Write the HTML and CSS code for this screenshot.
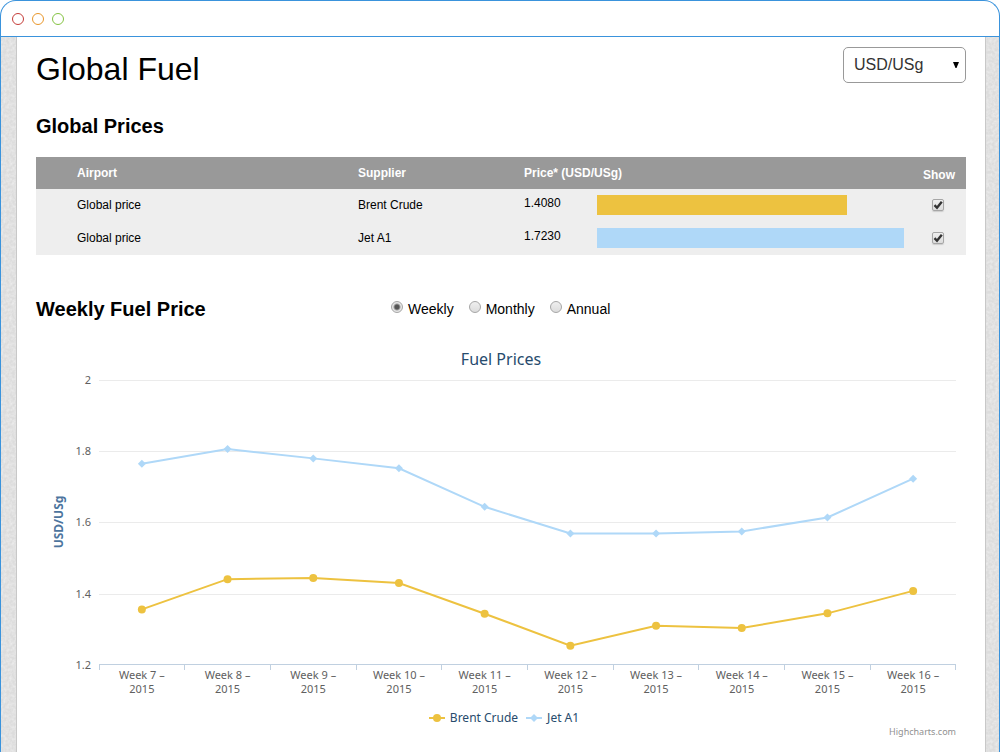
FILE: index.html
```html
<!DOCTYPE html>
<html lang="en">
<head>
    <meta charset="UTF-8">
    <meta name="viewport" content="width=device-width, initial-scale=1.0">
    <title>Global Fuel</title>
    <link rel="stylesheet" href="styles.css">
</head>
<body>

<div class="window">
    <div class="title-bar">
        <span class="dot dot-red"></span>
        <span class="dot dot-orange"></span>
        <span class="dot dot-green"></span>
    </div>

    <div class="backdrop">
        <main class="panel">
            <header class="page-header">
                <h1>Global Fuel</h1>
                <div class="unit-picker">
                    <select id="unit" aria-label="Unit">
                        <option>USD/USg</option>
                        <option>USD/L</option>
                    </select>
                    <svg class="unit-arrow" width="6" height="6" viewBox="0 0 6 6"><path d="M0 0h6L3.5 6h-1z"/></svg>
                </div>
            </header>

            <section class="prices">
                <h2>Global Prices</h2>
                <table>
                    <colgroup>
                        <col class="col-airport">
                        <col class="col-supplier">
                        <col class="col-price">
                        <col>
                        <col class="col-show">
                    </colgroup>
                    <thead>
                        <tr>
                            <th>Airport</th>
                            <th>Supplier</th>
                            <th colspan="2">Price* (USD/USg)</th>
                            <th class="show">Show</th>
                        </tr>
                    </thead>
                    <tbody>
                        <tr>
                            <td>Global price</td>
                            <td>Brent Crude</td>
                            <td class="price">1.4080</td>
                            <td><div class="bar bar-brent" style="width: 80%"></div></td>
                            <td class="show"><input type="checkbox" aria-label="Show Brent Crude" data-series="0" checked></td>
                        </tr>
                        <tr>
                            <td>Global price</td>
                            <td>Jet A1</td>
                            <td class="price">1.7230</td>
                            <td><div class="bar bar-jet" style="width: 98%"></div></td>
                            <td class="show"><input type="checkbox" aria-label="Show Jet A1" data-series="1" checked></td>
                        </tr>
                    </tbody>
                </table>
            </section>

            <section class="history">
                <div class="history-header">
                    <h2>Weekly Fuel Price</h2>
                    <div class="periods">
                        <label><input type="radio" name="period" value="weekly" checked>Weekly</label>
                        <label><input type="radio" name="period" value="monthly">Monthly</label>
                        <label><input type="radio" name="period" value="annual">Annual</label>
                    </div>
                </div>

                <figure class="chart">
                    <figcaption>Fuel Prices</figcaption>
                    <svg id="plot" height="331"></svg>
                    <div class="legend">
                        <span class="legend-item">
                            <svg width="16" height="8"><path class="line brent" d="M0 4H16"/><circle class="marker brent" cx="8" cy="4" r="4"/></svg>
                            Brent Crude
                        </span>
                        <span class="legend-item">
                            <svg width="16" height="8"><path class="line jet" d="M0 4H16"/><path class="marker jet" d="M8 0l4 4-4 4-4-4z"/></svg>
                            Jet A1
                        </span>
                    </div>
                    <div class="credits"><a href="http://www.highcharts.com">Highcharts.com</a></div>
                </figure>
            </section>
        </main>
    </div>
</div>

<script>
    var series = [
        { name: 'brent', visible: true, data: [1.356, 1.441, 1.444, 1.430, 1.344, 1.254, 1.310, 1.304, 1.345, 1.408] },
        { name: 'jet', visible: true, data: [1.765, 1.806, 1.780, 1.752, 1.644, 1.569, 1.569, 1.575, 1.614, 1.723] }
    ];
    var firstWeek = 7;
    var ticks = ['2', '1.8', '1.6', '1.4', '1.2'];

    // plot area inside the svg
    var left = 63, right = 10, top0 = 11, plotHeight = 285;

    function yFor(value) {
        return top0 + (2 - value) / 0.8 * plotHeight;
    }

    function drawChart() {
        var svg = document.getElementById('plot');
        var end = svg.getBoundingClientRect().width - right;
        var step = (end - left) / 10;
        var bottom = top0 + plotHeight - 1;
        var out = '';

        // horizontal grid
        ticks.forEach(function (label) {
            var y = Math.round(yFor(parseFloat(label)));
            if (label !== '1.2') {
                out += '<path class="grid" d="M' + left + ' ' + (y + 0.5) + 'H' + end + '"/>';
            }
            out += '<text class="label" text-anchor="end" x="55" y="' + (y + 4) + '">' + label + '</text>';
        });

        out += '<text class="axis-title" text-anchor="middle" transform="translate(27 153) rotate(-90)">USD/USg</text>';

        // x axis with its ticks and labels
        out += '<path class="axis" d="M' + left + ' ' + (bottom + 0.5) + 'H' + end + '"/>';
        for (var i = 0; i <= 10; i++) {
            var tickX = Math.min(Math.floor(left + i * step), end - 1) + 0.5;
            out += '<path class="axis" d="M' + tickX + ' ' + bottom + 'v6"/>';
        }
        for (var j = 0; j < 10; j++) {
            var x = left + (j + 0.5) * step;
            out += '<text class="label" text-anchor="middle" x="' + x + '" y="310">Week ' + (firstWeek + j) + ' –</text>';
            out += '<text class="label" text-anchor="middle" x="' + x + '" y="324">2015</text>';
        }

        series.forEach(function (s) {
            if (!s.visible) {
                return;
            }
            var points = s.data.map(function (value, n) {
                return [left + (n + 0.5) * step, yFor(value)];
            });
            out += '<polyline class="line ' + s.name + '" points="' + points.join(' ') + '"/>';
            points.forEach(function (p) {
                if (s.name === 'brent') {
                    out += '<circle class="marker brent" cx="' + p[0] + '" cy="' + p[1] + '" r="4"/>';
                } else {
                    out += '<path class="marker jet" d="M' + p[0] + ' ' + (p[1] - 4) + 'l4 4-4 4-4-4z"/>';
                }
            });
        });

        svg.innerHTML = out;
    }

    document.querySelectorAll('[data-series]').forEach(function (box) {
        box.addEventListener('change', function () {
            series[box.dataset.series].visible = box.checked;
            drawChart();
        });
    });

    window.addEventListener('resize', drawChart);
    drawChart();
</script>

</body>
</html>
```
FILE: styles.css
```css
* {
    box-sizing: border-box;
}

body {
    margin: 0;
    font-family: Arial, "Liberation Sans", sans-serif;
    font-size: 12px;
    color: #000;
    background-color: #fff;
}

/* Browser frame */
.window {
    display: flex;
    flex-direction: column;
    min-height: 100vh;
    border: 1px solid #3a93dc;
    border-bottom: none;
    border-radius: 16px 16px 0 0;
    overflow: hidden;
}

.title-bar {
    display: flex;
    align-items: center;
    gap: 8px;
    height: 36px;
    padding-left: 11px;
    border-bottom: 1px solid #3a93dc;
}

.dot {
    width: 12px;
    height: 12px;
    border: 1px solid;
    border-radius: 50%;
}

.dot-red {
    border-color: #c43c38;
}

.dot-orange {
    border-color: #e8962a;
}

.dot-green {
    border-color: #84c242;
}

.backdrop {
    display: flex;
    flex: 1;
    padding: 0 13px 0 15px;
    background-color: #dcdcdc;
    background-image: url("data:image/svg+xml,%3Csvg xmlns='http://www.w3.org/2000/svg' width='120' height='120'%3E%3Cfilter id='n'%3E%3CfeTurbulence type='fractalNoise' baseFrequency='.35' numOctaves='2' stitchTiles='stitch'/%3E%3CfeColorMatrix values='0 0 0 0 1 0 0 0 0 1 0 0 0 0 1 .8 0 0 0 -.25'/%3E%3C/filter%3E%3Crect width='120' height='120' filter='url(%23n)'/%3E%3C/svg%3E");
}

.panel {
    flex: 1;
    min-width: 0;
    padding: 10px 19px 0;
    background-color: #fff;
    border: solid #c8c8c8;
    border-width: 0 1px;
}

/* Header */
.page-header {
    display: flex;
    justify-content: space-between;
    align-items: flex-start;
}

h1 {
    margin: 0;
    font-size: 32px;
    font-weight: normal;
    line-height: 44px;
}

h2 {
    margin: 0;
    font-size: 20px;
    line-height: 24px;
}

.unit-picker {
    position: relative;
}

.unit-picker select {
    appearance: none;
    width: 123px;
    height: 36px;
    padding: 0 24px 2px 10px;
    font-family: inherit;
    font-size: 16px;
    color: #333;
    background-color: #fff;
    border: 1px solid #999;
    border-radius: 5px;
}

.unit-arrow {
    position: absolute;
    top: 15px;
    right: 7px;
    pointer-events: none;
}

/* Price table */
.prices {
    margin-top: 23px;
}

table {
    width: 100%;
    margin-top: 19px;
    table-layout: fixed;
    border-collapse: collapse;
    background-color: #eee;
}

.col-airport {
    width: 322px;
}

.col-supplier {
    width: 166px;
}

.col-price {
    width: 73px;
}

.col-show {
    width: 56px;
}

th, td {
    height: 33px;
    padding: 0;
    text-align: left;
}

th {
    height: 32px;
    color: #fff;
    background-color: #999;
}

th:first-child, td:first-child {
    padding-left: 41px;
}

td {
    padding-bottom: 2px;
}

td.price {
    padding-bottom: 6px;
}

.show {
    text-align: center;
}

th.show {
    padding: 4px 0 0 2px;
}

.bar {
    height: 20px;
    margin-top: 1px;
}

.bar-brent {
    background-color: #edc240;
}

.bar-jet {
    background-color: #afd8f8;
}

input[type="checkbox"], input[type="radio"] {
    appearance: none;
    margin: 0;
    border: 1px solid #a6a6a6;
    background: linear-gradient(#efefef, #dcdcdc);
}

input[type="checkbox"] {
    display: block;
    width: 12px;
    height: 12px;
    margin: 0 auto;
    border-radius: 2px;
    box-shadow: 0 1px 1px #ccc;
}

input[type="checkbox"]:checked {
    background: url("data:image/svg+xml,%3Csvg xmlns='http://www.w3.org/2000/svg' viewBox='0 0 10 10'%3E%3Cpath d='M1.5 5.2L4 7.8L8.8 1.8' fill='none' stroke='%23333' stroke-width='2.4'/%3E%3C/svg%3E"), linear-gradient(#efefef, #dcdcdc);
}

input[type="radio"] {
    width: 12px;
    height: 12px;
    margin-bottom: 4px;
    border-radius: 50%;
}

input[type="radio"]:checked {
    background: radial-gradient(circle, #555 0 2px, #e6e6e6 4px);
}

/* Weekly prices */
.history {
    margin-top: 42px;
}

.history-header {
    display: grid;
    grid-template-columns: 355px 1fr;
}

.periods {
    display: flex;
    gap: 15px;
    font-size: 14px;
    line-height: 24px;
}

.periods label {
    display: flex;
    align-items: center;
    gap: 5px;
}

/* Chart */
.chart {
    margin: 20px 0 0;
    padding-top: 8px;
    font-family: "Lucida Grande", "Lucida Sans Unicode", "Noto Sans", sans-serif;
}

.chart figcaption {
    font-size: 16px;
    line-height: 20px;
    text-align: center;
    color: #274b6d;
}

#plot {
    display: block;
    width: 100%;
}

.label {
    font-size: 11px;
    fill: #606060;
}

.axis-title {
    font-size: 12px;
    font-weight: bold;
    fill: #4d759e;
}

.grid {
    stroke: #ebebeb;
}

.axis {
    stroke: #c0d0e0;
}

.line {
    fill: none;
    stroke-width: 2;
}

.line.brent {
    stroke: #edc240;
}

.line.jet {
    stroke: #afd8f8;
}

.marker.brent {
    fill: #edc240;
}

.marker.jet {
    fill: #afd8f8;
}

.legend {
    display: flex;
    justify-content: center;
    gap: 8px;
    margin-top: 10px;
    padding-left: 6px;
    line-height: 16px;
    color: #274b6d;
}

.legend-item {
    display: flex;
    align-items: center;
    gap: 5px;
}

.credits {
    padding-right: 10px;
    font-size: 9px;
    line-height: 12px;
    text-align: right;
}

.credits a {
    color: #909090;
    text-decoration: none;
}
```
